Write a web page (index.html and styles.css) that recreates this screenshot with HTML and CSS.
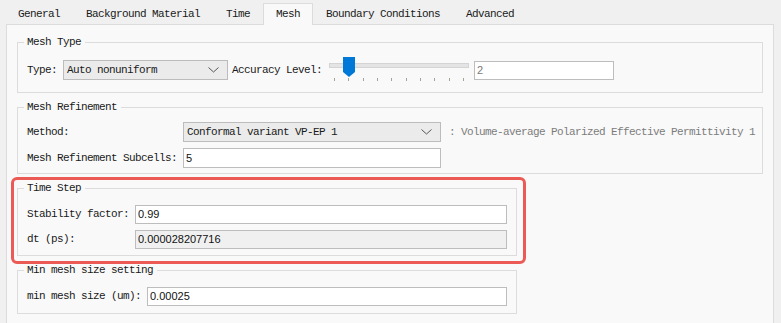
FILE: index.html
```html
<!DOCTYPE html>
<html>
<head>
<meta charset="utf-8">
<link rel="stylesheet" href="styles.css">
</head>
<body>
<div class="tabbar">
  <div class="tab">General</div>
  <div class="tab">Background Material</div>
  <div class="tab">Time</div>
  <div class="tab active">Mesh</div>
  <div class="tab">Boundary Conditions</div>
  <div class="tab">Advanced</div>
</div>
<div class="pane">
  <fieldset class="group g-type">
    <legend>Mesh Type</legend>
    <div class="row-type">
      <span class="lbl">Type:</span>
      <div class="select sel-type"><span>Auto nonuniform</span><svg class="chev" width="11" height="6" viewBox="0 0 11 6"><polyline points="0.5,0.5 5.5,5 10.5,0.5" fill="none" stroke="#555" stroke-width="1"/></svg></div>
      <span class="lbl acc">Accuracy Level:</span>
      <div class="slider">
        <div class="track"></div>
        <svg class="thumb" width="12" height="20" viewBox="0 0 12 20"><polygon points="0,0 12,0 12,15 6,20 0,15" fill="#0078d7"/></svg>
        <div class="ticks"><i></i><i></i><i></i><i></i><i></i><i></i><i></i><i></i><i></i><i></i></div>
      </div>
      <div class="input dim acc-in">2</div>
    </div>
  </fieldset>

  <fieldset class="group g-ref">
    <legend>Mesh Refinement</legend>
    <div class="grid grid-ref">
      <span class="lbl">Method:</span>
      <div class="select"><span>Conformal variant VP-EP 1</span><svg class="chev" width="11" height="6" viewBox="0 0 11 6"><polyline points="0.5,0.5 5.5,5 10.5,0.5" fill="none" stroke="#555" stroke-width="1"/></svg></div>
      <span class="note">: Volume-average Polarized Effective Permittivity 1</span>
      <span class="lbl">Mesh Refinement Subcells:</span>
      <div class="input">5</div>
      <span></span>
    </div>
  </fieldset>

  <div class="highlight">
    <fieldset class="group g-small g-time">
      <legend>Time Step</legend>
      <div class="grid grid-time">
        <span class="lbl">Stability factor:</span>
        <div class="input">0.99</div>
        <span class="lbl">dt (ps):</span>
        <div class="input ro">0.000028207716</div>
      </div>
    </fieldset>
    <div class="mark"></div>
  </div>

  <fieldset class="group g-small g-min">
    <legend>Min mesh size setting</legend>
    <div class="grid grid-min">
      <span class="lbl">min mesh size (um):</span>
      <div class="input">0.00025</div>
    </div>
  </fieldset>
</div>
</body>
</html>
```

FILE: styles.css
```css
* { box-sizing: border-box; }
html, body { margin: 0; padding: 0; }
body {
  background: #f0f0f0;
  font-family: "Liberation Mono", "DejaVu Sans Mono", monospace;
  font-size: 11px;
  letter-spacing: -0.6px;
  color: #1a1a1a;
  width: 781px;
  height: 323px;
  overflow: hidden;
}

.tabbar {
  display: flex;
  align-items: flex-end;
  height: 24px;
  padding-left: 5px;
}
.tab {
  height: 21px;
  line-height: 20px;
  padding: 0 12px;
  border: 1px solid transparent;
  border-bottom: 0;
  white-space: nowrap;
}
.tab.active {
  height: 22px;
  margin-bottom: -1px;
  background: #f9f9f9;
  border-color: #dcdcdc;
  position: relative;
  z-index: 1;
}

.pane {
  margin-left: 6px;
  width: 768px;
  height: 310px;
  background: #f9f9f9;
  border: 1px solid #dcdcdc;
  padding: 11px 10px 0 10px;
  display: flex;
  flex-direction: column;
  gap: 8px;
}

.group {
  margin: 0;
  border: 1px solid #dcdcdc;
  padding: 9px 9px 5px 9px;
  min-width: 0;
}
.group legend {
  line-height: 12px;
  padding: 0 4px 0 3px;
  margin-left: -3px;
  white-space: nowrap;
}
.g-type { padding-bottom: 10px; }
.g-small { width: 500px; padding-top: 10px; padding-bottom: 7px; }
.g-time { padding-bottom: 6px; }

.lbl { white-space: nowrap; line-height: 20px; }

.row-type {
  display: flex;
  align-items: flex-start;
  height: 25px;
}
.row-type .lbl { margin-top: 3px; }
.sel-type { margin-left: 6px; margin-top: 3px; width: 165px; }
.acc { margin-left: 4px; }

.select {
  height: 20px;
  background: #ebebeb;
  border: 1px solid #bcbcbc;
  display: flex;
  align-items: center;
  justify-content: space-between;
  padding: 0 8px 0 3px;
  white-space: nowrap;
}
.chev { display: block; }

.input {
  height: 19px;
  background: #fff;
  border: 1px solid #bdbdbd;
  font-family: "Liberation Sans", Arial, sans-serif;
  letter-spacing: 0;
  font-size: 11px;
  line-height: 17px;
  padding-left: 2px;
  color: #111;
}
.input.dim { color: #7a7a7a; }
.input.ro { background: #f0f0f0; }
.acc-in { width: 140px; margin-left: 5px; margin-top: 4px; }

.slider {
  position: relative;
  width: 140px;
  height: 25px;
  margin-left: 7px;
}
.track {
  margin-top: 6px;
  height: 5px;
  background: #e4e4e4;
  border: 1px solid #d4d4d4;
}
.thumb {
  position: absolute;
  left: 14px;
  top: 0;
}
.ticks {
  margin-top: 10px;
  padding: 0 5px;
  display: flex;
  justify-content: space-between;
}
.ticks i {
  display: block;
  width: 1px;
  height: 3px;
  background: #a3a396;
}

.grid {
  display: grid;
  align-items: center;
  row-gap: 6px;
}
.grid-ref { grid-template-columns: 156px 258px auto; }
.grid-ref .select, .grid-ref .input { height: 20px; }
.grid-ref .input { line-height: 18px; }
.note { color: #7c7c7c; padding-left: 8px; white-space: nowrap; }
.grid-time { grid-template-columns: 108px 1fr; row-gap: 5px; }
.grid-min { grid-template-columns: 120px 1fr; }

.highlight {
  position: relative;
  width: 500px;
}
.mark {
  position: absolute;
  left: -6px;
  top: -5px;
  right: -9px;
  bottom: -8px;
  border: 3px solid #eb5a55;
  border-radius: 6px;
  pointer-events: none;
}
```
